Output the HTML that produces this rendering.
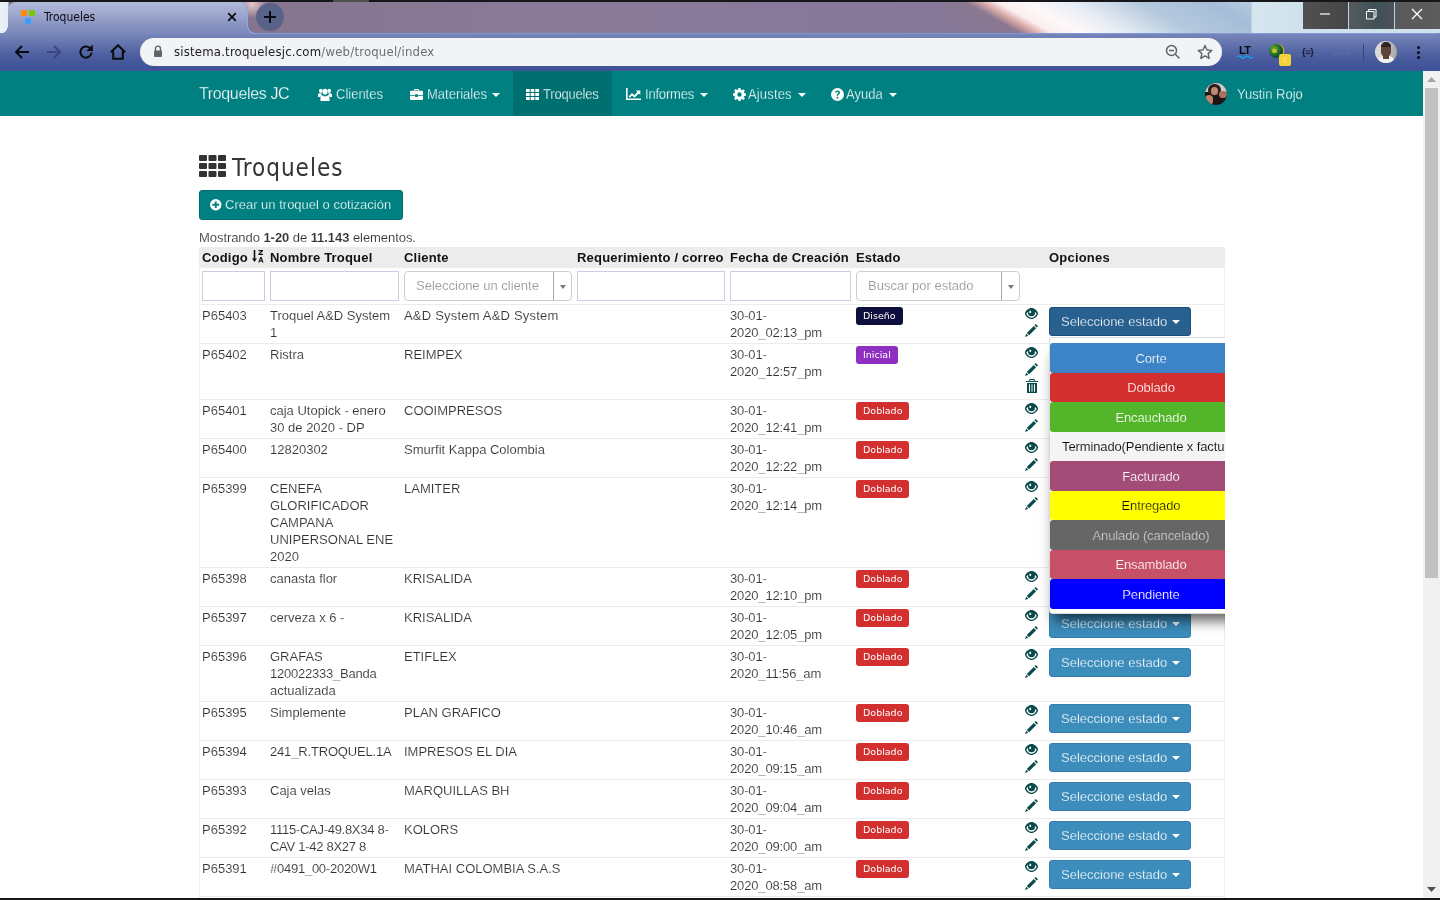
<!DOCTYPE html>
<html lang="es">
<head>
<meta charset="utf-8">
<title>Troqueles</title>
<style>
*{box-sizing:border-box}
html,body{margin:0;padding:0}
body{width:1440px;height:900px;overflow:hidden;position:relative;background:#fff;font-family:"Liberation Sans",sans-serif;font-size:13px;line-height:17px;color:#333}
svg{display:block}
.abs{position:absolute}
/* ---------- browser chrome ---------- */
#chrome{position:absolute;left:0;top:0;width:1440px;height:71px;overflow:hidden;will-change:transform}
#topline{position:absolute;left:0;top:0;width:1440px;height:2px;background:#17161b;z-index:5}
#strip{position:absolute;left:0;top:2px;width:1440px;height:32px;background:radial-gradient(ellipse 16px 14px at 252px 2px,#e9c9c8 0,rgba(233,201,200,0) 100%),linear-gradient(90deg,#eaf2f7 0,#e2ecf3 8px,#86748f 9px,#86748f 250px,#8a7a97 520px,#87799a 800px,#85789a 940px,#a9c1da 941px,#a9c1da 1251px,#d6e6ee 1252px,#cfe1ea 1303px)}
#streak{position:absolute;left:940px;top:2px;width:311px;height:32px;background:linear-gradient(29.4deg,#85789a 0,#8a7790 40px,#d9a9a8 48px,#fbeeee 56px,#fdf8f9 70px,#e9eef6 90px,#b4c9de 125px,#a5bed8 160px,#b4cbe0 181px)}
#toolbar{position:absolute;left:0;top:33px;width:1440px;height:38px;background:linear-gradient(180deg,#7987ba 0,#6f7fb4 5px,#5d6ea9 14px,#4b5d9f 24px,#42559a 32px,#40539a 38px)}
#tab{position:absolute;left:8px;top:2px;width:240px;height:32px;border-radius:8px 8px 0 0;border-right:1px solid #88a8e6;background:linear-gradient(180deg,#b2bad9 0,#a2abd0 10px,#8a95c2 22px,#7a88ba 32px)}
#tab:before,#tab:after{content:"";position:absolute;bottom:0;width:8px;height:8px}
#tab:before{left:-8px;background:radial-gradient(circle at 0 0,transparent 7.5px,#7c8abb 8px)}
#tab:after{right:-8px;background:radial-gradient(circle at 100% 0,transparent 6.5px,#88a8e6 7px,#88a8e6 7.6px,#7c8abb 8px)}
#tabtitle{position:absolute;left:44px;top:10px;font-family:"DejaVu Sans Condensed","DejaVu Sans",sans-serif;font-size:12px;line-height:15px;color:#0c0c14;letter-spacing:0}
#url{position:absolute;left:140px;top:38px;width:1082px;height:28px;border-radius:14px;background:#f1f3f4}
#urltext{position:absolute;left:174px;top:44px;font-family:"DejaVu Sans Condensed","DejaVu Sans",sans-serif;font-size:13px;line-height:16px;color:#202124;white-space:nowrap;letter-spacing:.2px}
#urltext span{color:#6b6f75}
#newtab{position:absolute;left:256px;top:3px;width:28px;height:28px;border-radius:14px;background:#596389}
#winbtns{position:absolute;left:1303px;top:2px;width:137px;height:27px;background:linear-gradient(90deg,#515152 0,#464647 45px,#555b5e 46px,#3f5058 75px,#4d5357 91px,#5a5a5b 92px,#5c5c5c 137px)}
#stripline{position:absolute;left:254px;top:33px;width:1184px;height:1px;background:#7f9ad6}
/* ---------- page ---------- */
#page{position:absolute;left:0;top:71px;width:1423px;height:827px;overflow:hidden;will-change:transform}
#scroll{position:absolute;left:1423px;top:71px;width:17px;height:827px;background:#f1f1f1}
#thumb{position:absolute;left:1425px;top:88px;width:13px;height:490px;background:#c1c1c1}
#botline{position:absolute;left:0;top:898px;width:1440px;height:2px;background:#161616}
#nav{position:absolute;left:0;top:0;width:1423px;height:45px;background:#008080;color:#fff;font-size:13px;line-height:17px}
#nav .it{position:absolute;top:15px;white-space:nowrap;transform:scaleY(1.07);transform-origin:0 13px}
#nav .act{position:absolute;left:513px;top:0;width:99px;height:45px;background:#006f6f}
#nav svg{position:absolute;fill:#fff}
.caret{position:absolute;width:0;height:0;border-left:4px solid transparent;border-right:4px solid transparent;border-top:4px solid #fff}
#brand{position:absolute;left:199px;top:13px;font-size:16px;line-height:20px;white-space:nowrap;letter-spacing:-.36px}
h1{position:absolute;left:232px;top:80px;margin:0;font-family:"DejaVu Sans Condensed","DejaVu Sans",sans-serif;font-weight:normal;font-size:24px;line-height:34px;color:#333;letter-spacing:1px}
#crear{position:absolute;left:199px;top:119px;width:204px;height:30px;background:#008080;border:1px solid #006d6d;border-radius:3px;color:#fff;font-size:13px;line-height:17px;white-space:nowrap}
#crear span{position:absolute;left:25px;top:5px}
#summary{position:absolute;left:199px;top:158px;white-space:nowrap;letter-spacing:-.06px}

#grid{position:absolute;left:199px;top:176px;width:1026px;height:660px;overflow:hidden}
#grid:before{content:'';position:absolute;left:0;top:21px;width:1px;height:700px;background:#eee}
#grid:after{content:'';position:absolute;left:1025px;top:21px;width:1px;height:700px;background:#eee}
table{border-collapse:separate;border-spacing:0;table-layout:fixed;width:1026px}
th,td{padding:2px 3px;vertical-align:top;text-align:left;border-top:1px solid #ececec;word-wrap:break-word}
tr.hd th{background:#ececec;height:21px;padding:1px 3px 0;font-weight:bold;color:#111;white-space:nowrap;border-top:none;line-height:19px;letter-spacing:.2px}
tbody td:nth-child(5){letter-spacing:-.15px}
tbody td,#summary,.sel span{-webkit-text-stroke:.12px #fff}
.badge{-webkit-text-stroke:0}
#nav .it,#brand,#crear span{-webkit-text-stroke:.25px #008080}
.btn{-webkit-text-stroke:.25px #3c8dbc}
.btn.open{-webkit-text-stroke-color:#286090}
tr.flt td{padding:3px 3px 3px;height:36px;border-top:none}
.inp{height:30px;border:1px solid #c9cfe0;background:#fff;margin-right:-1px}
.sel{position:relative;height:30px;border:1px solid #ccc;border-radius:4px;background:#fff;color:#999;white-space:nowrap;overflow:hidden;margin-right:-1px}
.sel span{position:absolute;left:11px;top:5px}
.sel i{position:absolute;right:17px;top:0;width:1px;height:28px;background:#aaa}
.sel b{position:absolute;right:5px;top:13px;width:0;height:0;border-left:3.5px solid transparent;border-right:3.5px solid transparent;border-top:4px solid #777}
.badge{display:block;width:max-content;height:18px;font-family:"DejaVu Sans",sans-serif;font-size:9.5px;line-height:12px;color:#fff;padding:3px 7px 3px;border-radius:3px}
td.ics{padding:3px 0 3px 3px}
.ic{fill:#0a4a4a}
.ics div{height:16px}
.ics div+div+div{height:17px}
.btn{position:relative;width:142px;height:29px;border:1px solid #367fa9;border-radius:3px;background:#3c8dbc;color:#fff;padding:5px 0 0 11px;white-space:nowrap}
.btn.open{background:#286090;border-color:#204d74}
.crt{position:absolute;left:122px;top:12px;width:0;height:0;border-left:4px solid transparent;border-right:4px solid transparent;border-top:4px solid #fff}
#menu{z-index:3;position:absolute;left:850px;top:90px;width:204px;height:277px;background:#fff;border:1px solid rgba(0,0,0,.15);border-radius:4px;padding:5px 0;box-shadow:0 12px 12px -5px rgba(0,0,0,.6)}
.mi{letter-spacing:-.12px;height:29.5px;color:#fff;text-align:center;padding-top:6.5px;border-radius:3px;white-space:nowrap;overflow:visible}
</style>
</head>
<body>
<div id="chrome">
  <div id="strip"></div>
  <div id="streak"></div>
  <div id="toolbar"></div>
  <div id="stripline"></div>
  <div id="topline"><div class="abs" style="left:333px;top:0;width:36px;height:2px;background:#4e4e50"></div></div>
  <div id="tab">
    <div class="abs" style="left:13px;top:8px;width:6px;height:6px;background:#ff8c00"></div>
    <div class="abs" style="left:21px;top:8px;width:6px;height:6px;background:#7ac70c"></div>
    <div class="abs" style="left:17px;top:16px;width:6px;height:6px;background:#3d9cf5"></div>
    <svg class="abs" style="left:219px;top:10px" width="10" height="10" viewBox="0 0 10 10"><path d="M1.2 1.2 8.8 8.8M8.8 1.2 1.2 8.8" stroke="#0c0c14" stroke-width="1.7" fill="none"/></svg>
  </div>
  <div id="tabtitle">Troqueles</div>
  <div id="newtab"><svg width="28" height="28" viewBox="0 0 28 28"><path d="M14 8v12M8 14h12" stroke="#0a0a12" stroke-width="2" fill="none"/></svg></div>
  <div id="winbtns">
    <div class="abs" style="left:45px;top:0;width:1px;height:27px;background:#b9d3e4"></div>
    <div class="abs" style="left:91px;top:0;width:1px;height:27px;background:#b9d3e4"></div>
    <svg class="abs" style="left:0;top:0" width="137" height="27" viewBox="0 0 137 27"><g stroke="#fff" stroke-width="1" fill="none"><path d="M17 12h10" stroke-width="1.200"/><path d="M63.500 9.500h7.500v7.500h-7.500zM65.500 9.500v-2h7.500v7.500h-2"/><path d="M109 7l10 10M119 7l-10 10" stroke-width="1.3"/></g></svg>
  </div>
  <!-- nav buttons -->
  <svg class="abs" style="left:14px;top:44px" width="16" height="16" viewBox="0 0 16 16"><path d="M15 8H2.5M8 2 2 8l6 6" stroke="#0b0b12" stroke-width="2" fill="none"/></svg>
  <svg class="abs" style="left:46px;top:44px" width="16" height="16" viewBox="0 0 16 16"><path d="M1 8h12.5M8 2l6 6-6 6" stroke="#3a4680" stroke-width="2" fill="none"/></svg>
  <svg class="abs" style="left:78px;top:44px" width="16" height="16" viewBox="0 0 16 16"><path d="M13.600 8.500A5.600 5.600 0 1 1 11.800 3.900" stroke="#0b0b12" stroke-width="2" fill="none"/><path d="M14.800 .5v6.500H8.300z" fill="#0b0b12"/></svg>
  <svg class="abs" style="left:110px;top:44px" width="16" height="16" viewBox="0 0 16 16"><path d="M.8 8.300 8 1.200l7.200 7.100M3.200 7V14.800h9.600V7" stroke="#0b0b12" stroke-width="2" fill="none" stroke-linejoin="miter"/></svg>
  <div id="url"></div>
  <svg class="abs" style="left:153px;top:45px" width="10" height="13" viewBox="0 0 10 13"><path d="M2.5 6V3.6a2.5 2.5 0 0 1 5 0V6" stroke="#5f6368" stroke-width="1.4" fill="none"/><rect x="1" y="5.5" width="8" height="6.5" rx="1" fill="#5f6368"/></svg>
  <div id="urltext">sistema.troquelesjc.com<span>/web/troquel/index</span></div>
  <svg class="abs" style="left:1165px;top:44px" width="16" height="16" viewBox="0 0 16 16"><circle cx="6.5" cy="6.5" r="5" stroke="#5f6368" stroke-width="1.5" fill="none"/><path d="M10.3 10.3 14.5 14.5M4 6.5h5" stroke="#5f6368" stroke-width="1.5" fill="none"/></svg>
  <svg class="abs" style="left:1197px;top:44px" width="16" height="16" viewBox="0 0 16 16"><path d="M8 1.5l2 4.5 4.8.4-3.7 3.2 1.1 4.7L8 11.8l-4.2 2.5 1.1-4.7L1.2 6.4 6 6z" stroke="#5f6368" stroke-width="1.4" fill="none" stroke-linejoin="round"/></svg>
  <!-- extensions -->
  <div class="abs" style="left:1239px;top:44px;font-weight:bold;font-size:11px;line-height:12px;color:#0b0b12;letter-spacing:-.6px">LT</div>
  <svg class="abs" style="left:1237px;top:55px" width="16" height="4" viewBox="0 0 16 4"><path d="M0 2q2-2 4 0t4 0 4 0 4 0" stroke="#1aa0e8" stroke-width="1.600" fill="none"/></svg>
  <div class="abs" style="left:1269px;top:44px;width:14px;height:14px;border-radius:7px;background:radial-gradient(circle at 35% 35%,#7fae2a 0,#2f7d2c 35%,#0d4a3a 65%,#0a2f4e 100%);box-shadow:1.500px 0 0 #d4ad00"></div>
  <div class="abs" style="left:1272px;top:49px;width:5px;height:4px;border-radius:2px;background:#c7c32a"></div>
  <div class="abs" style="left:1279px;top:54px;width:12px;height:12px;border-radius:2px;background:#f5d237;color:#fff;font-size:8px;line-height:12px;text-align:center;font-weight:bold">:</div>
  <div class="abs" style="left:1302px;top:46px;font-weight:bold;font-size:9px;line-height:12px;color:#101426;letter-spacing:-.3px;white-space:nowrap">{≡}</div>
  <div class="abs" style="left:1333px;top:46px;font-style:italic;font-weight:bold;font-size:10px;line-height:12px;color:#5c6aa8;white-space:nowrap">php</div>
  <div class="abs" style="left:1363px;top:44px;width:1px;height:16px;background:#36457f"></div>
  <div class="abs" style="left:1375px;top:41px;width:22px;height:22px;border-radius:11px;background:linear-gradient(90deg,#dcdcdc 0,#d2d2d2 45%,#a3a3a3 100%);overflow:hidden"><div class="abs" style="left:2px;top:15px;width:18px;height:12px;border-radius:7px 7px 0 0;background:#f1f1f1"></div><div class="abs" style="left:8px;top:11px;width:6px;height:7px;background:#5a4137"></div><div class="abs" style="left:6px;top:1px;width:10px;height:15px;border-radius:5px;background:#5d4338"></div><div class="abs" style="left:6px;top:1px;width:10px;height:5px;border-radius:5px 5px 0 0;background:#2f2522"></div></div>
  <div class="abs" style="left:1417px;top:46px;width:3px;height:3px;border-radius:2px;background:#0b0b12;box-shadow:0 5px 0 #0b0b12,0 10px 0 #0b0b12"></div>
</div>
<div id="page">
<div id="nav">
  <div class="act"></div>
  <div id="brand">Troqueles JC</div>
  <!-- users -->
  <svg style="left:318px;top:17px" width="14" height="13" viewBox="0 0 15 12" preserveAspectRatio="none"><circle cx="3" cy="2.6" r="2"/><circle cx="12" cy="2.6" r="2"/><circle cx="7.5" cy="3.4" r="2.7"/><path d="M0 8.2V6.4q0-1.6 1.6-1.6h2.2Q3 6 4.2 7.2 2.8 7.4 2.4 8.2zM15 8.2V6.4q0-1.6-1.6-1.6h-2.2Q12 6 10.8 7.2q1.4.2 1.8 1zM2.6 12V9.6Q2.8 7 5.2 7q2.3 1.6 4.6 0 2.4 0 2.6 2.6V12q0 0-1.4 0H4z"/></svg>
  <div class="it" style="left:336px">Clientes</div>
  <!-- briefcase -->
  <svg style="left:410px;top:18px" width="13" height="11" viewBox="0 0 14 12" preserveAspectRatio="none"><path d="M4.5 2V.8Q4.5 0 5.3 0h3.4q.8 0 .8.8V2h3.3Q14 2 14 3.2V6.5H8.5V5.6h-3v.9H0V3.2Q0 2 1.2 2zM5.6 2h2.8V1.1H5.6zM0 7.4h5.5v1.2h3V7.4H14v3.4q0 1.2-1.2 1.2H1.2Q0 12 0 10.800z"/></svg>
  <div class="it" style="left:427px">Materiales</div>
  <div class="caret" style="left:492px;top:22px"></div>
  <!-- th -->
  <svg style="left:526px;top:18px" width="13" height="11" viewBox="0 0 13 11"><path d="M0 0h3.7v3H0zM4.65 0h3.7v3h-3.7zM9.3 0h3.7v3H9.3zM0 4h3.7v3H0zM4.65 4h3.7v3h-3.7zM9.3 4h3.7v3H9.3zM0 8h3.7v3H0zM4.65 8h3.7v3h-3.7zM9.3 8h3.7v3H9.3z"/></svg>
  <div class="it" style="left:543px;letter-spacing:-.2px;-webkit-text-stroke-color:#006f6f">Troqueles</div>
  <!-- chart -->
  <svg style="left:626px;top:17px" width="15" height="12" viewBox="0 0 15 12"><path d="M0 0h1.6v10.400H15V12H0z"/><path d="M2.600 8.600 6 5l2.400 2.200L11.400 4l-1.500-1.400H14.300V7l-1.500-1.500L8.500 9.800 6.100 7.500 3.800 9.800z"/></svg>
  <div class="it" style="left:645px;letter-spacing:-.2px">Informes</div>
  <div class="caret" style="left:700px;top:22px"></div>
  <!-- cog -->
  <svg style="left:733px;top:17px" width="13" height="13" viewBox="0 0 13 13"><path fill-rule="evenodd" d="M5.400 0h2.200l.3 1.700 1.100.5 1.400-1 1.500 1.500-1 1.400.5 1.100 1.600.3v2.200l-1.600.3-.5 1.100 1 1.400-1.500 1.500-1.400-1-1.100.5L7.600 13H5.400l-.3-1.600-1.100-.5-1.400 1-1.500-1.500 1-1.400-.5-1.100L0 7.600V5.400l1.600-.3.500-1.100-1-1.400L2.600 1.100l1.400 1 1.100-.5zM6.500 4.300a2.200 2.200 0 1 0 0 4.400 2.200 2.200 0 0 0 0-4.400z"/></svg>
  <div class="it" style="left:748px;letter-spacing:.15px">Ajustes</div>
  <div class="caret" style="left:798px;top:22px"></div>
  <!-- question -->
  <svg style="left:831px;top:17px" width="13" height="13" viewBox="0 0 13 13"><path fill-rule="evenodd" d="M6.500 0a6.500 6.500 0 1 0 0 13 6.500 6.500 0 0 0 0-13zM4 4.600Q4.200 2.500 6.600 2.500 9 2.600 9 4.600q0 1.200-1.200 1.900-.6.400-.6 1.200H5.700q0-1.500 1-2.200.7-.5.700-1 0-.7-.9-.7-.8 0-.9.800zM5.600 8.800h1.700v1.700H5.600z"/></svg>
  <div class="it" style="left:846px">Ayuda</div>
  <div class="caret" style="left:889px;top:22px"></div>
  <!-- user -->
  <div class="abs" style="left:1205px;top:12px;width:22px;height:22px;border-radius:11px;overflow:hidden;background:#1d1513"><div class="abs" style="left:0;top:0;width:22px;height:9px;background:#c9cdc9"></div><div class="abs" style="left:3px;top:1px;width:13px;height:12px;border-radius:6px;background:#2a1d1b"></div><div class="abs" style="left:6px;top:4px;width:7px;height:8px;border-radius:4px;background:#c08a74"></div><div class="abs" style="left:0;top:12px;width:8px;height:10px;border-radius:5px;background:#b98468"></div><div class="abs" style="left:14px;top:8px;width:8px;height:7px;border-radius:4px;background:#a8735c"></div></div>
  <div class="it" style="left:1237px">Yustin Rojo</div>
</div>

<svg class="abs" style="left:199px;top:84px" width="27" height="22" viewBox="0 0 27 22"><path fill="#333" d="M0 1q0-1 1-1h6q1 0 1 1v4q0 1-1 1H1Q0 6 0 5zM9.500 1q0-1 1-1h6q1 0 1 1v4q0 1-1 1h-6q-1 0-1-1zM19 1q0-1 1-1h6q1 0 1 1v4q0 1-1 1h-6q-1 0-1-1zM0 9q0-1 1-1h6q1 0 1 1v4q0 1-1 1H1q-1 0-1-1zM9.500 9q0-1 1-1h6q1 0 1 1v4q0 1-1 1h-6q-1 0-1-1zM19 9q0-1 1-1h6q1 0 1 1v4q0 1-1 1h-6q-1 0-1-1zM0 17q0-1 1-1h6q1 0 1 1v4q0 1-1 1H1q-1 0-1-1zM9.500 17q0-1 1-1h6q1 0 1 1v4q0 1-1 1h-6q-1 0-1-1zM19 17q0-1 1-1h6q1 0 1 1v4q0 1-1 1h-6q-1 0-1-1z"/></svg>
<h1>Troqueles</h1>
<div id="crear"><svg class="abs" style="left:10px;top:8px" width="11.5" height="11.5" viewBox="0 0 12 12"><path fill="#fff" fill-rule="evenodd" d="M6 0a6 6 0 1 0 0 12A6 6 0 0 0 6 0zM5 2.500h2V5h2.500v2H7v2.500H5V7H2.500V5H5z"/></svg><span>Crear un troquel o cotización</span></div>
<div id="summary">Mostrando <b>1-20</b> de <b>11.143</b> elementos.</div>
<div id="grid">
<table>
<colgroup><col style="width:68px"><col style="width:134px"><col style="width:173px"><col style="width:153px"><col style="width:126px"><col style="width:169px"><col style="width:24px"><col style="width:179px"></colgroup>
<thead>
<tr class="hd"><th style="position:relative">Codigo<svg class="abs" style="left:52.500px;top:3px" width="12" height="13" viewBox="0 0 12 13" preserveAspectRatio="none"><path fill="#111" d="M1.700 0h1.600v8.500H5L2.500 12 0 8.500h1.700zM6.500 0h4.500v1L8.200 3.800H11V5H6.300V4L9.100 1.200H6.500zM8.200 7h1.400l1.900 5.500h-1.300l-.35-1.100H7.900l-.35 1.100H6.300zM8.250 10.400h1.300L8.900 8.300z"/></svg></th><th>Nombre Troquel</th><th>Cliente</th><th>Requerimiento / correo</th><th>Fecha de Creación</th><th>Estado</th><th></th><th>Opciones</th></tr>
<tr class="flt"><td><div class="inp"></div></td><td><div class="inp"></div></td><td><div class="sel"><span>Seleccione un cliente</span><i></i><b></b></div></td><td><div class="inp"></div></td><td><div class="inp"></div></td><td><div class="sel"><span>Buscar por estado</span><i></i><b></b></div></td><td></td><td></td></tr>
</thead>
<tbody>
<tr><td>P65403</td><td>Troquel A&amp;D System<br>1</td><td><span style="letter-spacing:.2px">A&amp;D System A&amp;D System</span></td><td></td><td>30-01-<br>2020_02:13_pm</td><td><span class="badge" style="background:#0f0f3d">Diseño</span></td><td class="ics"><div><svg class="ic" width="13" height="11" viewBox="0 0 13 11"><path fill-rule="evenodd" d="M6.500 0C9.500 0 12 2.400 13 5v1C12 8.600 9.500 11 6.500 11S1 8.600 0 6V5C1 2.400 3.500 0 6.500 0zM1.300 5.700Q3.400 9.800 6.500 9.800T11.700 5.700Q11 4.600 9.900 3.700Q10 4.200 10 4.800A3.500 3.500 0 0 1 3 4.800Q3 4.200 3.100 3.700Q2 4.600 1.300 5.700zM4.400 2.800h1.700v2.200H4.400z"/></svg></div><div><svg class="ic" width="13" height="13" viewBox="0 0 13 13"><path d="M10.700 0 13 2.300 11.800 3.500 9.500 1.200zM8.800 1.900l2.300 2.300-7 7L1.800 8.900zM1.200 9.700l2.100 2.100L0 13z"/></svg></div></td><td><div class="btn open">Seleccione estado<i class="crt"></i></div></td></tr>
<tr><td>P65402</td><td>Ristra</td><td>REIMPEX</td><td></td><td>30-01-<br>2020_12:57_pm</td><td><span class="badge" style="background:#8e2fc2">Inicial</span></td><td class="ics"><div><svg class="ic" width="13" height="11" viewBox="0 0 13 11"><path fill-rule="evenodd" d="M6.500 0C9.500 0 12 2.400 13 5v1C12 8.600 9.500 11 6.500 11S1 8.600 0 6V5C1 2.400 3.500 0 6.500 0zM1.300 5.700Q3.400 9.800 6.500 9.800T11.700 5.700Q11 4.600 9.900 3.700Q10 4.200 10 4.800A3.500 3.500 0 0 1 3 4.800Q3 4.200 3.100 3.700Q2 4.600 1.300 5.700zM4.400 2.800h1.700v2.200H4.400z"/></svg></div><div><svg class="ic" width="13" height="13" viewBox="0 0 13 13"><path d="M10.700 0 13 2.300 11.800 3.500 9.500 1.200zM8.800 1.900l2.300 2.300-7 7L1.800 8.900zM1.200 9.700l2.100 2.100L0 13z"/></svg></div><div><svg class="ic" width="12" height="14" viewBox="0 0 12 14" style="margin-left:1px"><path fill-rule="evenodd" d="M3.300 0h5.400v2.200h-1V1H4.300v1.200h-1zM0 2h12v1H0zM1 4h10v10H1zM3 5.200v7.600h1V5.200zM5.500 5.200v7.600h1V5.200zM8 5.200v7.600h1V5.200z"/></svg></div></td><td><div class="btn">Seleccione estado<i class="crt"></i></div></td></tr>
<tr><td>P65401</td><td>caja Utopick - enero<br>30 de 2020 - DP</td><td>COOIMPRESOS</td><td></td><td>30-01-<br>2020_12:41_pm</td><td><span class="badge" style="background:#d32f2f">Doblado</span></td><td class="ics"><div><svg class="ic" width="13" height="11" viewBox="0 0 13 11"><path fill-rule="evenodd" d="M6.500 0C9.500 0 12 2.400 13 5v1C12 8.600 9.500 11 6.500 11S1 8.600 0 6V5C1 2.400 3.500 0 6.500 0zM1.300 5.700Q3.400 9.800 6.500 9.800T11.700 5.700Q11 4.600 9.900 3.700Q10 4.200 10 4.800A3.500 3.500 0 0 1 3 4.800Q3 4.200 3.100 3.700Q2 4.600 1.300 5.700zM4.400 2.800h1.700v2.200H4.400z"/></svg></div><div><svg class="ic" width="13" height="13" viewBox="0 0 13 13"><path d="M10.700 0 13 2.300 11.800 3.500 9.500 1.200zM8.800 1.900l2.300 2.300-7 7L1.800 8.900zM1.200 9.700l2.100 2.100L0 13z"/></svg></div></td><td><div class="btn">Seleccione estado<i class="crt"></i></div></td></tr>
<tr><td>P65400</td><td>12820302</td><td>Smurfit Kappa Colombia</td><td></td><td>30-01-<br>2020_12:22_pm</td><td><span class="badge" style="background:#d32f2f">Doblado</span></td><td class="ics"><div><svg class="ic" width="13" height="11" viewBox="0 0 13 11"><path fill-rule="evenodd" d="M6.500 0C9.500 0 12 2.400 13 5v1C12 8.600 9.500 11 6.500 11S1 8.600 0 6V5C1 2.400 3.500 0 6.500 0zM1.300 5.700Q3.400 9.800 6.500 9.800T11.700 5.700Q11 4.600 9.900 3.700Q10 4.200 10 4.800A3.500 3.500 0 0 1 3 4.800Q3 4.200 3.100 3.700Q2 4.600 1.300 5.700zM4.400 2.800h1.700v2.200H4.400z"/></svg></div><div><svg class="ic" width="13" height="13" viewBox="0 0 13 13"><path d="M10.700 0 13 2.300 11.800 3.500 9.500 1.200zM8.800 1.900l2.300 2.300-7 7L1.800 8.900zM1.200 9.700l2.100 2.100L0 13z"/></svg></div></td><td><div class="btn">Seleccione estado<i class="crt"></i></div></td></tr>
<tr><td>P65399</td><td>CENEFA<br>GLORIFICADOR<br>CAMPANA<br>UNIPERSONAL ENE<br>2020</td><td>LAMITER</td><td></td><td>30-01-<br>2020_12:14_pm</td><td><span class="badge" style="background:#d32f2f">Doblado</span></td><td class="ics"><div><svg class="ic" width="13" height="11" viewBox="0 0 13 11"><path fill-rule="evenodd" d="M6.500 0C9.500 0 12 2.400 13 5v1C12 8.600 9.500 11 6.500 11S1 8.600 0 6V5C1 2.400 3.500 0 6.500 0zM1.300 5.700Q3.400 9.800 6.500 9.800T11.700 5.700Q11 4.600 9.900 3.700Q10 4.200 10 4.800A3.500 3.500 0 0 1 3 4.800Q3 4.200 3.100 3.700Q2 4.600 1.300 5.700zM4.400 2.800h1.700v2.200H4.400z"/></svg></div><div><svg class="ic" width="13" height="13" viewBox="0 0 13 13"><path d="M10.700 0 13 2.300 11.800 3.500 9.500 1.200zM8.800 1.900l2.300 2.300-7 7L1.800 8.900zM1.200 9.700l2.100 2.100L0 13z"/></svg></div></td><td><div class="btn">Seleccione estado<i class="crt"></i></div></td></tr>
<tr><td>P65398</td><td>canasta flor</td><td>KRISALIDA</td><td></td><td>30-01-<br>2020_12:10_pm</td><td><span class="badge" style="background:#d32f2f">Doblado</span></td><td class="ics"><div><svg class="ic" width="13" height="11" viewBox="0 0 13 11"><path fill-rule="evenodd" d="M6.500 0C9.500 0 12 2.400 13 5v1C12 8.600 9.500 11 6.500 11S1 8.600 0 6V5C1 2.400 3.500 0 6.500 0zM1.300 5.700Q3.400 9.800 6.500 9.800T11.700 5.700Q11 4.600 9.900 3.700Q10 4.200 10 4.800A3.500 3.500 0 0 1 3 4.800Q3 4.200 3.100 3.700Q2 4.600 1.300 5.700zM4.400 2.800h1.700v2.200H4.400z"/></svg></div><div><svg class="ic" width="13" height="13" viewBox="0 0 13 13"><path d="M10.700 0 13 2.300 11.800 3.500 9.500 1.200zM8.800 1.900l2.300 2.300-7 7L1.800 8.900zM1.200 9.700l2.100 2.100L0 13z"/></svg></div></td><td><div class="btn">Seleccione estado<i class="crt"></i></div></td></tr>
<tr><td>P65397</td><td>cerveza x 6 -</td><td>KRISALIDA</td><td></td><td>30-01-<br>2020_12:05_pm</td><td><span class="badge" style="background:#d32f2f">Doblado</span></td><td class="ics"><div><svg class="ic" width="13" height="11" viewBox="0 0 13 11"><path fill-rule="evenodd" d="M6.500 0C9.500 0 12 2.400 13 5v1C12 8.600 9.500 11 6.500 11S1 8.600 0 6V5C1 2.400 3.500 0 6.500 0zM1.300 5.700Q3.400 9.800 6.500 9.800T11.700 5.700Q11 4.600 9.900 3.700Q10 4.200 10 4.800A3.500 3.500 0 0 1 3 4.800Q3 4.200 3.100 3.700Q2 4.600 1.300 5.700zM4.400 2.800h1.700v2.200H4.400z"/></svg></div><div><svg class="ic" width="13" height="13" viewBox="0 0 13 13"><path d="M10.700 0 13 2.300 11.800 3.500 9.500 1.200zM8.800 1.900l2.300 2.300-7 7L1.800 8.900zM1.200 9.700l2.100 2.100L0 13z"/></svg></div></td><td><div class="btn">Seleccione estado<i class="crt"></i></div></td></tr>
<tr><td>P65396</td><td>GRAFAS<br><span style="letter-spacing:-.22px">120022333_Banda</span><br>actualizada</td><td>ETIFLEX</td><td></td><td>30-01-<br>2020_11:56_am</td><td><span class="badge" style="background:#d32f2f">Doblado</span></td><td class="ics"><div><svg class="ic" width="13" height="11" viewBox="0 0 13 11"><path fill-rule="evenodd" d="M6.500 0C9.500 0 12 2.400 13 5v1C12 8.600 9.500 11 6.500 11S1 8.600 0 6V5C1 2.400 3.500 0 6.500 0zM1.300 5.700Q3.400 9.800 6.500 9.800T11.700 5.700Q11 4.600 9.900 3.700Q10 4.200 10 4.800A3.500 3.500 0 0 1 3 4.800Q3 4.200 3.100 3.700Q2 4.600 1.300 5.700zM4.400 2.800h1.700v2.200H4.400z"/></svg></div><div><svg class="ic" width="13" height="13" viewBox="0 0 13 13"><path d="M10.700 0 13 2.300 11.800 3.500 9.500 1.200zM8.800 1.900l2.300 2.300-7 7L1.800 8.900zM1.200 9.700l2.100 2.100L0 13z"/></svg></div></td><td><div class="btn">Seleccione estado<i class="crt"></i></div></td></tr>
<tr><td>P65395</td><td>Simplemente</td><td>PLAN GRAFICO</td><td></td><td>30-01-<br>2020_10:46_am</td><td><span class="badge" style="background:#d32f2f">Doblado</span></td><td class="ics"><div><svg class="ic" width="13" height="11" viewBox="0 0 13 11"><path fill-rule="evenodd" d="M6.500 0C9.500 0 12 2.400 13 5v1C12 8.600 9.500 11 6.500 11S1 8.600 0 6V5C1 2.400 3.500 0 6.500 0zM1.300 5.700Q3.400 9.800 6.500 9.800T11.700 5.700Q11 4.600 9.900 3.700Q10 4.200 10 4.800A3.500 3.500 0 0 1 3 4.800Q3 4.200 3.100 3.700Q2 4.600 1.300 5.700zM4.400 2.800h1.700v2.200H4.400z"/></svg></div><div><svg class="ic" width="13" height="13" viewBox="0 0 13 13"><path d="M10.700 0 13 2.300 11.800 3.500 9.500 1.200zM8.800 1.900l2.300 2.300-7 7L1.800 8.900zM1.200 9.700l2.100 2.100L0 13z"/></svg></div></td><td><div class="btn">Seleccione estado<i class="crt"></i></div></td></tr>
<tr><td>P65394</td><td><span style="letter-spacing:-.17px">241_R.TROQUEL.1A</span></td><td>IMPRESOS EL DIA</td><td></td><td>30-01-<br>2020_09:15_am</td><td><span class="badge" style="background:#d32f2f">Doblado</span></td><td class="ics"><div><svg class="ic" width="13" height="11" viewBox="0 0 13 11"><path fill-rule="evenodd" d="M6.500 0C9.500 0 12 2.400 13 5v1C12 8.600 9.500 11 6.500 11S1 8.600 0 6V5C1 2.400 3.500 0 6.500 0zM1.300 5.700Q3.400 9.800 6.500 9.800T11.700 5.700Q11 4.600 9.900 3.700Q10 4.200 10 4.800A3.500 3.500 0 0 1 3 4.800Q3 4.200 3.100 3.700Q2 4.600 1.300 5.700zM4.400 2.800h1.700v2.200H4.400z"/></svg></div><div><svg class="ic" width="13" height="13" viewBox="0 0 13 13"><path d="M10.700 0 13 2.300 11.800 3.500 9.500 1.200zM8.800 1.900l2.300 2.300-7 7L1.800 8.900zM1.200 9.700l2.100 2.100L0 13z"/></svg></div></td><td><div class="btn">Seleccione estado<i class="crt"></i></div></td></tr>
<tr><td>P65393</td><td>Caja velas</td><td>MARQUILLAS BH</td><td></td><td>30-01-<br>2020_09:04_am</td><td><span class="badge" style="background:#d32f2f">Doblado</span></td><td class="ics"><div><svg class="ic" width="13" height="11" viewBox="0 0 13 11"><path fill-rule="evenodd" d="M6.500 0C9.500 0 12 2.400 13 5v1C12 8.600 9.500 11 6.500 11S1 8.600 0 6V5C1 2.400 3.500 0 6.500 0zM1.300 5.700Q3.400 9.800 6.500 9.800T11.700 5.700Q11 4.600 9.900 3.700Q10 4.200 10 4.800A3.500 3.500 0 0 1 3 4.800Q3 4.200 3.100 3.700Q2 4.600 1.300 5.700zM4.400 2.800h1.700v2.200H4.400z"/></svg></div><div><svg class="ic" width="13" height="13" viewBox="0 0 13 13"><path d="M10.700 0 13 2.300 11.800 3.500 9.500 1.200zM8.800 1.900l2.300 2.300-7 7L1.800 8.900zM1.200 9.700l2.100 2.100L0 13z"/></svg></div></td><td><div class="btn">Seleccione estado<i class="crt"></i></div></td></tr>
<tr><td>P65392</td><td><span style="letter-spacing:-.28px">1115-CAJ-49.8X34 8-<br>CAV 1-42 8X27 8</span></td><td>KOLORS</td><td></td><td>30-01-<br>2020_09:00_am</td><td><span class="badge" style="background:#d32f2f">Doblado</span></td><td class="ics"><div><svg class="ic" width="13" height="11" viewBox="0 0 13 11"><path fill-rule="evenodd" d="M6.500 0C9.500 0 12 2.400 13 5v1C12 8.600 9.500 11 6.500 11S1 8.600 0 6V5C1 2.400 3.500 0 6.500 0zM1.300 5.700Q3.400 9.800 6.500 9.800T11.700 5.700Q11 4.600 9.900 3.700Q10 4.200 10 4.800A3.500 3.500 0 0 1 3 4.800Q3 4.200 3.100 3.700Q2 4.600 1.300 5.700zM4.400 2.800h1.700v2.200H4.400z"/></svg></div><div><svg class="ic" width="13" height="13" viewBox="0 0 13 13"><path d="M10.700 0 13 2.300 11.800 3.500 9.500 1.200zM8.800 1.900l2.300 2.300-7 7L1.800 8.900zM1.200 9.700l2.100 2.100L0 13z"/></svg></div></td><td><div class="btn">Seleccione estado<i class="crt"></i></div></td></tr>
<tr><td>P65391</td><td><span style="letter-spacing:-.25px">#0491_00-2020W1</span></td><td>MATHAI COLOMBIA S.A.S</td><td></td><td>30-01-<br>2020_08:58_am</td><td><span class="badge" style="background:#d32f2f">Doblado</span></td><td class="ics"><div><svg class="ic" width="13" height="11" viewBox="0 0 13 11"><path fill-rule="evenodd" d="M6.500 0C9.500 0 12 2.400 13 5v1C12 8.600 9.500 11 6.500 11S1 8.600 0 6V5C1 2.400 3.500 0 6.500 0zM1.300 5.700Q3.400 9.800 6.500 9.800T11.700 5.700Q11 4.600 9.900 3.700Q10 4.200 10 4.800A3.500 3.500 0 0 1 3 4.800Q3 4.200 3.100 3.700Q2 4.600 1.300 5.700zM4.400 2.800h1.700v2.200H4.400z"/></svg></div><div><svg class="ic" width="13" height="13" viewBox="0 0 13 13"><path d="M10.700 0 13 2.300 11.800 3.500 9.500 1.200zM8.800 1.900l2.300 2.300-7 7L1.800 8.900zM1.200 9.700l2.100 2.100L0 13z"/></svg></div></td><td><div class="btn">Seleccione estado<i class="crt"></i></div></td></tr>
<tr><td colspan="8" style="height:10px"></td></tr>
</tbody>
</table>
<div id="menu">
<div class="mi" style="background:#3c84c6;-webkit-text-stroke:.2px #3c84c6">Corte</div>
<div class="mi" style="background:#d32f2f;-webkit-text-stroke:.2px #d32f2f">Doblado</div>
<div class="mi" style="background:#53b52a;-webkit-text-stroke:.2px #53b52a">Encauchado</div>
<div class="mi" style="background:#f4f4f4;-webkit-text-stroke:.08px #f4f4f4;color:#111;text-align:left;padding-left:12px">Terminado(Pendiente x facturar)</div>
<div class="mi" style="background:#a34c78;-webkit-text-stroke:.2px #a34c78">Facturado</div>
<div class="mi" style="background:#ffff00;-webkit-text-stroke:.2px #ffff00;color:#111">Entregado</div>
<div class="mi" style="background:#666666;-webkit-text-stroke:.2px #666666;color:#d0d0d0">Anulado (cancelado)</div>
<div class="mi" style="background:#c65067;-webkit-text-stroke:.2px #c65067">Ensamblado</div>
<div class="mi" style="background:#0000ff;-webkit-text-stroke:.2px #0000ff">Pendiente</div>
</div>
</div>
</div>
<div id="scroll">
<svg class="abs" style="left:4px;top:6px" width="9" height="5" viewBox="0 0 9 5"><path d="M0 5 4.500 0 9 5z" fill="#a3a3a3"/></svg>
<svg class="abs" style="left:4px;top:816px" width="9" height="5" viewBox="0 0 9 5"><path d="M0 0 4.500 5 9 0z" fill="#505050"/></svg>
</div>
<div id="thumb"></div>
<div id="botline"></div>
</body>
</html>
